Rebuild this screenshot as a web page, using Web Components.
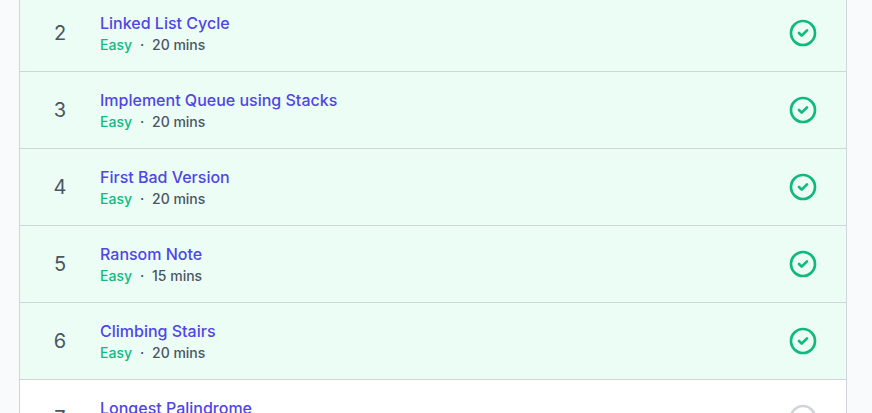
<!DOCTYPE html>
<html>
<head>
<meta charset="utf-8">
<style>
  html, body { margin: 0; height: 413px; overflow: hidden; background: #f9fafc; }
</style>
</head>
<body>
<problem-list>
  <problem-row num="2" name="Linked List Cycle" time="20 mins" done></problem-row>
  <problem-row num="3" name="Implement Queue using Stacks" time="20 mins" done></problem-row>
  <problem-row num="4" name="First Bad Version" time="20 mins" done></problem-row>
  <problem-row num="5" name="Ransom Note" time="15 mins" done></problem-row>
  <problem-row num="6" name="Climbing Stairs" time="20 mins" done></problem-row>
  <problem-row num="7" name="Longest Palindrome" time="20 mins"></problem-row>
</problem-list>
<script>
const listTemplate = document.createElement("template");
listTemplate.innerHTML = `
<style>
    :host {
        display: block;
        box-sizing: border-box;
        width: 828px;
        height: 413px;
        margin-left: 19px;
        border-left: 1px solid #d1d5db;
        border-right: 1px solid #d1d5db;
        overflow: hidden;
    }
    .rows { margin-top: -5px; }
</style>
<div class="rows"><slot></slot></div>`;

class ProblemList extends HTMLElement {
    constructor() {
        super();
        this.attachShadow({ mode: "open" });
        this.shadowRoot.appendChild(listTemplate.content.cloneNode(true));
    }
}

const rowTemplate = document.createElement("template");
rowTemplate.innerHTML = `
<style>
    :host {
        display: grid;
        grid-template-columns: 80px 1fr auto;
        align-items: center;
        box-sizing: border-box;
        height: 77px;
        padding-right: 27px;
        border-bottom: 1px solid #d1d5db;
        background: #fff;
        font-family: Inter, "Liberation Sans", sans-serif;
    }
    :host([done]) { background: #ecfdf5; }
    .num { text-align: center; font-size: 20px; line-height: 28px; color: #4b5563; }
    .name { font-size: 16px; line-height: 24px; font-weight: 500; color: #4f46e5; }
    .meta { display: flex; font-size: 14px; line-height: 20px; font-weight: 500; color: #4b5563; }
    .level { color: #10b981; }
    .dot { width: 20px; text-align: center; }
    svg { display: block; width: 32px; height: 32px; fill: none; stroke: #d1d5db; stroke-width: 2; stroke-linecap: round; stroke-linejoin: round; }
    :host([done]) svg { stroke: #10b981; }
    .tick { display: none; }
    :host([done]) .tick { display: inline; }
</style>
<div class="num"></div>
<div>
    <div class="name"></div>
    <div class="meta"><span class="level">Easy</span><span class="dot">·</span><span class="time"></span></div>
</div>
<svg viewBox="0 0 24 24">
    <circle cx="12" cy="12" r="9"></circle>
    <path class="tick" d="M9 12l2 2 4-4"></path>
</svg>`;

class ProblemRow extends HTMLElement {
    constructor() {
        super();
        this.attachShadow({ mode: "open" });
        this.shadowRoot.appendChild(rowTemplate.content.cloneNode(true));
        this.shadowRoot.querySelector(".num").textContent = this.getAttribute("num");
        this.shadowRoot.querySelector(".name").textContent = this.getAttribute("name");
        this.shadowRoot.querySelector(".time").textContent = this.getAttribute("time");
    }
}

window.customElements.define("problem-list", ProblemList);
window.customElements.define("problem-row", ProblemRow);
</script>
</body>
</html>
